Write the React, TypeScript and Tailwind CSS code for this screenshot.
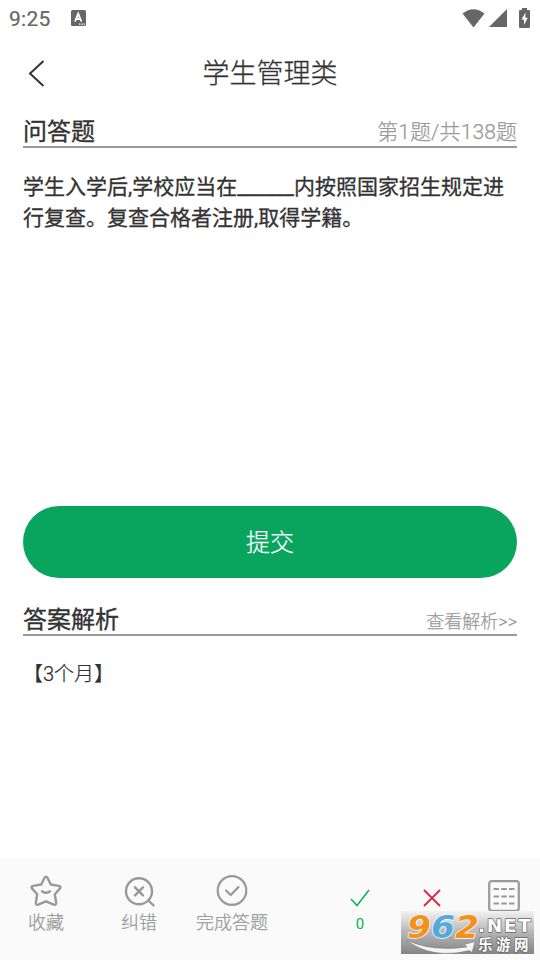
import type { ReactNode } from "react";

const StatusBar = () => (
  <div className="flex h-9 items-center justify-between pl-[9px] pr-[10px] text-[#666]">
    <div className="flex items-center gap-[20px]">
      <span className="pt-px text-[21px] leading-9 tracking-[0.3px] [-webkit-text-stroke:0.2px_#666]">9:25</span>
      <svg width="15" height="16" viewBox="0 0 15 16">
        <rect width="15" height="16" rx="1.5" fill="#666" />
        <path d="M4 11.500 7.200 3.800 10.400 11.500M5.200 9h4" fill="none" stroke="#fff" strokeWidth="1.9" />
        <path d="M8 14.2h1.4M10.4 14.2h1.4M12.6 14.2h1.2" stroke="#fff" strokeWidth="1.3" />
      </svg>
    </div>
    <div className="flex items-center gap-1">
      <svg width="23" height="19" viewBox="0 0 23 19">
        <path d="M.5 4.5Q11.5-4 22.5 4.5L11.5 18.5Z" fill="#666" />
      </svg>
      <svg width="18" height="18" viewBox="0 0 18 18">
        <path d="M0 18 18 0V18Z" fill="#666" />
      </svg>
      <svg width="11" height="20" viewBox="0 0 11 20" className="ml-[8px]">
        <path d="M3 0h5v2h2q1 0 1 1v16q0 1-1 1H1q-1 0-1-1V3q0-1 1-1h2Z" fill="#666" />
        <path d="M6.500 4.500 2.500 11.500H5V17L8.700 9.800H6.300Z" fill="#fff" />
      </svg>
    </div>
  </div>
);

const SectionHeader = ({ title, children }: { title: string; children: ReactNode }) => (
  <div className="flex h-9 items-end justify-between border-b-2 border-[#999]">
    <h2 className="text-[24px] leading-[28px] [-webkit-text-stroke:0.35px_#333]">{title}</h2>
    {children}
  </div>
);

const StarIcon = () => (
  <svg width="34" height="34" viewBox="0 0 34 34" fill="none" stroke="#999" strokeWidth="2.4" strokeLinecap="round" strokeLinejoin="round">
    <path d="M15.600 3.700Q17 1.500 18.400 3.700L21.800 10.500L29.900 11.900Q32.600 12.600 30.800 14.600L25.800 20.300L27.200 28.800Q27.200 31.500 24.800 30.600L17 27.300L9.200 30.600Q6.800 31.500 6.800 28.800L8.200 20.300L3.200 14.600Q1.400 12.600 4.100 11.900L12.200 10.500Z" />
    <path d="M13 17.200q4 3.200 8 0" />
  </svg>
);

const SearchErrorIcon = () => (
  <svg width="34" height="34" viewBox="0 0 34 34" fill="none" stroke="#999" strokeWidth="2.4" strokeLinecap="round">
    <circle cx="17" cy="17.300" r="13" />
    <path d="M26.500 26.500 31.500 31.500M13 13.300l8 8M21 13.300l-8 8" />
  </svg>
);

const DoneIcon = () => (
  <svg width="34" height="34" viewBox="0 0 34 34" fill="none" stroke="#999" strokeWidth="2.2" strokeLinecap="round" strokeLinejoin="round">
    <circle cx="17" cy="16.500" r="14.300" />
    <path d="M11 16.500 15.800 21 23.500 13" />
  </svg>
);

const SheetIcon = () => (
  <svg width="32" height="32" viewBox="0 0 32 32" fill="none" stroke="#999" strokeWidth="2.2">
    <rect x="1.200" y="1.200" width="29.600" height="29.600" rx="2.500" />
    <path
      d="M5.500 9h5.500M13.300 9h5.500M21 9h5.500M5.500 16.500h5.500M13.300 16.500h5.500M21 16.500h5.500M5.500 23.500h5.500M13.300 23.500h5.500M21 23.500h5.500"
      strokeWidth="2"
    />
  </svg>
);

const Watermark = () => (
  <div className="absolute left-[401px] top-[53px] h-[43px] w-[133px] bg-linear-to-b from-[#f2f2f2] via-[#b5b5b5] to-[#858585]">
    <svg width="133" height="43" viewBox="0 0 133 43" fontFamily="'DejaVu Sans', sans-serif" fontWeight="700" className="overflow-visible">
      <path d="M6 29.500Q32 41 66 36L63.500 33.500 74 30.500 71 41.500 68.500 39.500Q31 48.500 6 29.500Z" fill="#f4f4f4" stroke="#777" strokeWidth=".5" />
      <g fontSize="32" fontStyle="italic" stroke="#fff" strokeWidth="1.400" strokeLinejoin="round" paintOrder="stroke">
        <text x="6" y="26.500" textLength="24" lengthAdjust="spacingAndGlyphs" fill="#f39120">9</text>
        <text x="30" y="26.500" textLength="24" lengthAdjust="spacingAndGlyphs" fill="#55a9dd">6</text>
        <text x="54" y="26.500" textLength="24" lengthAdjust="spacingAndGlyphs" fill="#f39120">2</text>
      </g>
      <g fill="#fff" stroke="#666" strokeWidth="1.400" strokeLinejoin="round" paintOrder="stroke">
        <text x="77" y="21" fontSize="18.500" letterSpacing="1.700">.NET</text>
        <text x="77" y="38.500" fontSize="14.500" letterSpacing="3.500" fontFamily="'Noto Sans CJK SC', sans-serif">乐游网</text>
      </g>
    </svg>
  </div>
);

const actions = [
  { label: "收藏", icon: <StarIcon />, width: "w-[92px]" },
  { label: "纠错", icon: <SearchErrorIcon />, width: "w-[94px]" },
  { label: "完成答题", icon: <DoneIcon />, width: "w-[92px]" },
];

const BottomBar = () => (
  <footer className="relative flex h-[102px] bg-[#fafafa]">
    {actions.map((action) => (
      <div
        key={action.label}
        className={`${action.width} flex shrink-0 flex-col items-center pt-4 text-[18px] font-light leading-[30px] text-[#999] [-webkit-text-stroke:0.25px_#999]`}
      >
        {action.icon}
        <span className="whitespace-nowrap">{action.label}</span>
      </div>
    ))}
    <div className="ml-[46px] flex w-[72px] flex-col items-center pt-[30px] text-[15px] text-[#09b053]">
      <svg width="20" height="20" viewBox="0 0 20 20" fill="none" stroke="#0fb45a" strokeWidth="1.600">
        <path d="M1 11 7 17.500 19 2" />
      </svg>
      <span className="mt-[5px] leading-[22px]">0</span>
    </div>
    <div className="flex w-[72px] justify-center pt-[31px]">
      <svg width="18" height="18" viewBox="0 0 18 18" stroke="#db2848" strokeWidth="1.900">
        <path d="M1 1 17 17M17 1 1 17" />
      </svg>
    </div>
    <div className="flex w-[72px] justify-center pt-[22px]">
      <SheetIcon />
    </div>
    <Watermark />
  </footer>
);

const App = () => {
  return (
    <div className="flex h-[960px] w-[540px] flex-col overflow-hidden bg-white font-['Roboto','Noto_Sans_CJK_SC',sans-serif] text-[#333]">
      <StatusBar />
      <header className="grid h-[76px] grid-cols-[1fr_auto_1fr] items-center">
        <svg width="18" height="28" viewBox="0 0 18 28" className="ml-7" fill="none" stroke="#333" strokeWidth="2">
          <path d="M15.500 1 2 13.500 15.500 26" />
        </svg>
        <h1 className="pb-px text-[27px] font-light leading-[72px] [-webkit-text-stroke:0.3px_#333]">学生管理类</h1>
      </header>

      <main className="flex-1 px-[23px]">
        <SectionHeader title="问答题">
          <span className="text-[21px] font-light leading-[27px] tracking-[0.1px] text-[#999] [-webkit-text-stroke:0.25px_#999]">
            第1题/共138题
          </span>
        </SectionHeader>
        <p className="mt-[24px] h-[334px] text-[21px] leading-[31px] [-webkit-text-stroke:0.3px_#333]">
          学生入学后,学校应当在______内按照国家招生规定进行复查。复查合格者注册,取得学籍。
        </p>
        <button className="h-[72px] w-full rounded-full bg-[#09a55f] pt-[2px] text-[24px] font-light text-white [-webkit-text-stroke:0.25px_#fff]">
          提交
        </button>
        <div className="mt-[22px]">
          <SectionHeader title="答案解析">
            <span className="text-[18px] font-light leading-[25px] text-[#999] [-webkit-text-stroke:0.25px_#999]">查看解析&gt;&gt;</span>
          </SectionHeader>
        </div>
        <p className="mt-[23px] text-[20px] font-light leading-[30px] [-webkit-text-stroke:0.25px_#333]">【3个月】</p>
      </main>

      <BottomBar />
    </div>
  );
};

export default App;
